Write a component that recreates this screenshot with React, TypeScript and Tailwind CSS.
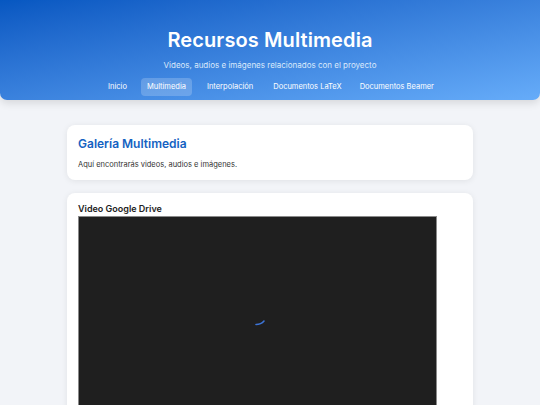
import React from "react";

export default function App() {
  return (
    <div className="min-h-[405px] bg-[#f2f4f8] overflow-hidden" style={{ fontFamily: "Inter, 'Noto Sans', sans-serif" }}>
      <header className="h-[100px] rounded-b-[7px] bg-gradient-to-br from-[#0657c1] to-[#66acf9] shadow-[0_3px_8px_rgba(0,0,0,0.12)] flex flex-col items-center text-white">
        <h1 className="mt-[28px] text-[20px] leading-[24px] font-semibold tracking-[0.1px]">Recursos Multimedia</h1>
        <p className="mt-[8px] text-[8px] leading-[10px] text-[#dbe9fb]">Videos, audios e imágenes relacionados con el proyecto</p>
        <nav className="mt-[8px] flex items-center text-[7.5px] leading-[10px]">
          <a className="px-[8px] py-[4px] rounded-[4px] mr-[6px]">Inicio</a>
          <a className="px-[6px] py-[4px] rounded-[4px] bg-white/20 mr-[9px]">Multimedia</a>
          <a className="px-[6px] py-[4px] rounded-[4px] mr-[8px]">Interpolación</a>
          <a className="px-[6px] py-[4px] rounded-[4px] mr-[6px]">Documentos LaTeX</a>
          <a className="px-[6px] py-[4px] rounded-[4px]">Documentos Beamer</a>
        </nav>
      </header>
      <main className="px-[67px] pt-[25px] flex flex-col gap-[13px]">
        <section className="bg-white rounded-[8px] shadow-[0_1px_6px_rgba(0,0,0,0.08)] px-[11px] pt-[11px] h-[55px]">
          <h2 className="text-[12px] leading-[16px] font-semibold text-[#1462c2]">Galería Multimedia</h2>
          <p className="mt-[8px] text-[7.5px] leading-[10px] text-[#333]">Aquí encontrarás videos, audios e imágenes.</p>
        </section>
        <section className="bg-white rounded-[8px] shadow-[0_1px_6px_rgba(0,0,0,0.08)] px-[11px] pt-[10px] h-[240px]">
          <h3 className="text-[9px] leading-[12px] font-semibold text-[#222]">Video Google Drive</h3>
          <div className="mt-[1px] w-[359px] h-[220px] bg-[#1f1f1f] border border-[#8a8a8a] border-b-0 flex justify-center">
            <svg width="14" height="14" viewBox="0 0 14 14" className="mt-[96px] ml-[6px]">
              <path d="M2 11.5 Q 7 11.5 10 8" stroke="#3d74d6" strokeWidth="1.6" fill="none" strokeLinecap="round" />
            </svg>
          </div>
        </section>
      </main>
    </div>
  );
}
